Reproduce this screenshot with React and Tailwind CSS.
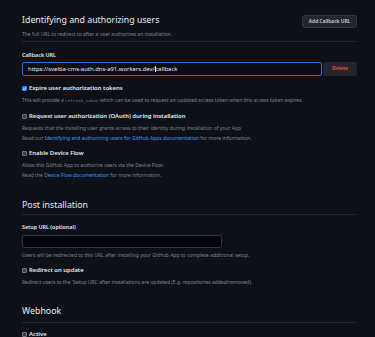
import React from "react";

const font = { fontFamily: '"Noto Sans", "Liberation Sans", sans-serif' };

function Check({ checked }) {
  if (checked) {
    return (
      <span className="inline-flex w-[5px] h-[5px] rounded-[1px] bg-[#2f81f7] items-center justify-center shrink-0">
        <svg viewBox="0 0 10 10" className="w-[5px] h-[5px]">
          <path d="M2 5.2 L4.2 7.3 L8 2.8" stroke="#fff" strokeWidth="1.6" fill="none" />
        </svg>
      </span>
    );
  }
  return <span className="inline-block w-[5px] h-[5px] rounded-[1px] bg-[#3a3f46] border-[0.5px] border-[#6e7681] shrink-0" />;
}

function CheckRow({ checked, children, mt }) {
  return (
    <div className={`flex items-center gap-[2px] h-[8px] ${mt}`}>
      <Check checked={checked} />
      <span className="text-[5.9px] leading-[8px] font-semibold text-[#e6edf3] whitespace-nowrap">{children}</span>
    </div>
  );
}

function Desc({ children, mt }) {
  return <div className={`h-[8px] text-[5px] leading-[8px] text-[#7d8590] whitespace-nowrap ${mt}`}>{children}</div>;
}

function Link({ children }) {
  return <span className="text-[#4493f8]">{children}</span>;
}

export default function App() {
  return (
    <div className="w-[375px] h-[337px] bg-[#0d1117] overflow-hidden" style={font}>
      <div className="w-[335px] ml-[22px] pt-[13px]">
        <div className="flex items-center justify-between h-[15px]">
          <div className="text-[8.8px] leading-[15px] text-[#e6edf3]">Identifying and authorizing users</div>
          <div className="h-[13px] w-[55px] mt-[2px] rounded-[3px] bg-[#21262d] border-[0.5px] border-[#30363d] flex items-center justify-center text-[4.9px] font-semibold text-[#c9d1d9] whitespace-nowrap">
            Add Callback URL
          </div>
        </div>
        <Desc mt="mt-[2px]">The full URL to redirect to after a user authorizes an installation.</Desc>
        <div className="mt-[3px] h-px bg-[#21262d]" />
        <div className="mt-[9px] h-[8px] text-[5.4px] leading-[8px] font-semibold text-[#e6edf3]">Callback URL</div>
        <div className="mt-[3px] flex gap-[1px] h-[14px]">
          <div className="w-[300px] h-[14px] rounded-[2px] border border-[#2f6fd6] bg-[#0a0d12] flex items-center pl-[5px] text-[5.9px] text-[#e6edf3] whitespace-nowrap">
            https://sveltia-cms-auth.dns-a91.workers.dev/
            <span className="inline-block w-[0.6px] h-[6px] bg-[#e6edf3]" />
            callback
          </div>
          <div className="w-[34px] h-[14px] rounded-[3px] bg-[#21262d] flex items-center justify-center text-[5px] font-semibold text-[#f85149]">
            Delete
          </div>
        </div>
        <CheckRow checked mt="mt-[8px]">Expire user authorization tokens</CheckRow>
        <Desc mt="mt-[4px]">
          This will provide a <span className="text-[4.3px]" style={{ fontFamily: '"Liberation Mono", monospace' }}>refresh_token</span> which can be used to request an updated access token when this access token expires.
        </Desc>
        <CheckRow mt="mt-[8px]">Request user authorization (OAuth) during installation</CheckRow>
        <Desc mt="mt-[4px]">Requests that the installing user grants access to their identity during installation of your App</Desc>
        <Desc mt="mt-[2px]">
          Read our <Link>Identifying and authorizing users for GitHub Apps documentation</Link> for more information.
        </Desc>
        <CheckRow mt="mt-[7px]">Enable Device Flow</CheckRow>
        <Desc mt="mt-[4px]">Allow this GitHub App to authorize users via the Device Flow.</Desc>
        <Desc mt="mt-[2px]">
          Read the <Link>Device Flow documentation</Link> for more information.
        </Desc>

        <div className="mt-[20px] h-[12px] text-[8.8px] leading-[12px] text-[#e6edf3]">Post installation</div>
        <div className="mt-[3px] h-px bg-[#21262d]" />
        <div className="mt-[8px] h-[8px] text-[5.4px] leading-[8px] font-semibold text-[#e6edf3]">Setup URL (optional)</div>
        <div className="mt-[4px] w-[200px] h-[13px] rounded-[2px] border-[0.5px] border-[#30363d] bg-[#010409]" />
        <Desc mt="mt-[3px]">Users will be redirected to this URL after installing your GitHub App to complete additional setup.</Desc>
        <CheckRow mt="mt-[7px]">Redirect on update</CheckRow>
        <Desc mt="mt-[4px]">Redirect users to the 'Setup URL' after installations are updated (E.g. repositories added/removed).</Desc>

        <div className="mt-[19px] h-[12px] text-[8.8px] leading-[12px] text-[#e6edf3]">Webhook</div>
        <div className="mt-[5px] h-px bg-[#21262d]" />
        <CheckRow mt="mt-[7px]">Active</CheckRow>
      </div>
    </div>
  );
}
